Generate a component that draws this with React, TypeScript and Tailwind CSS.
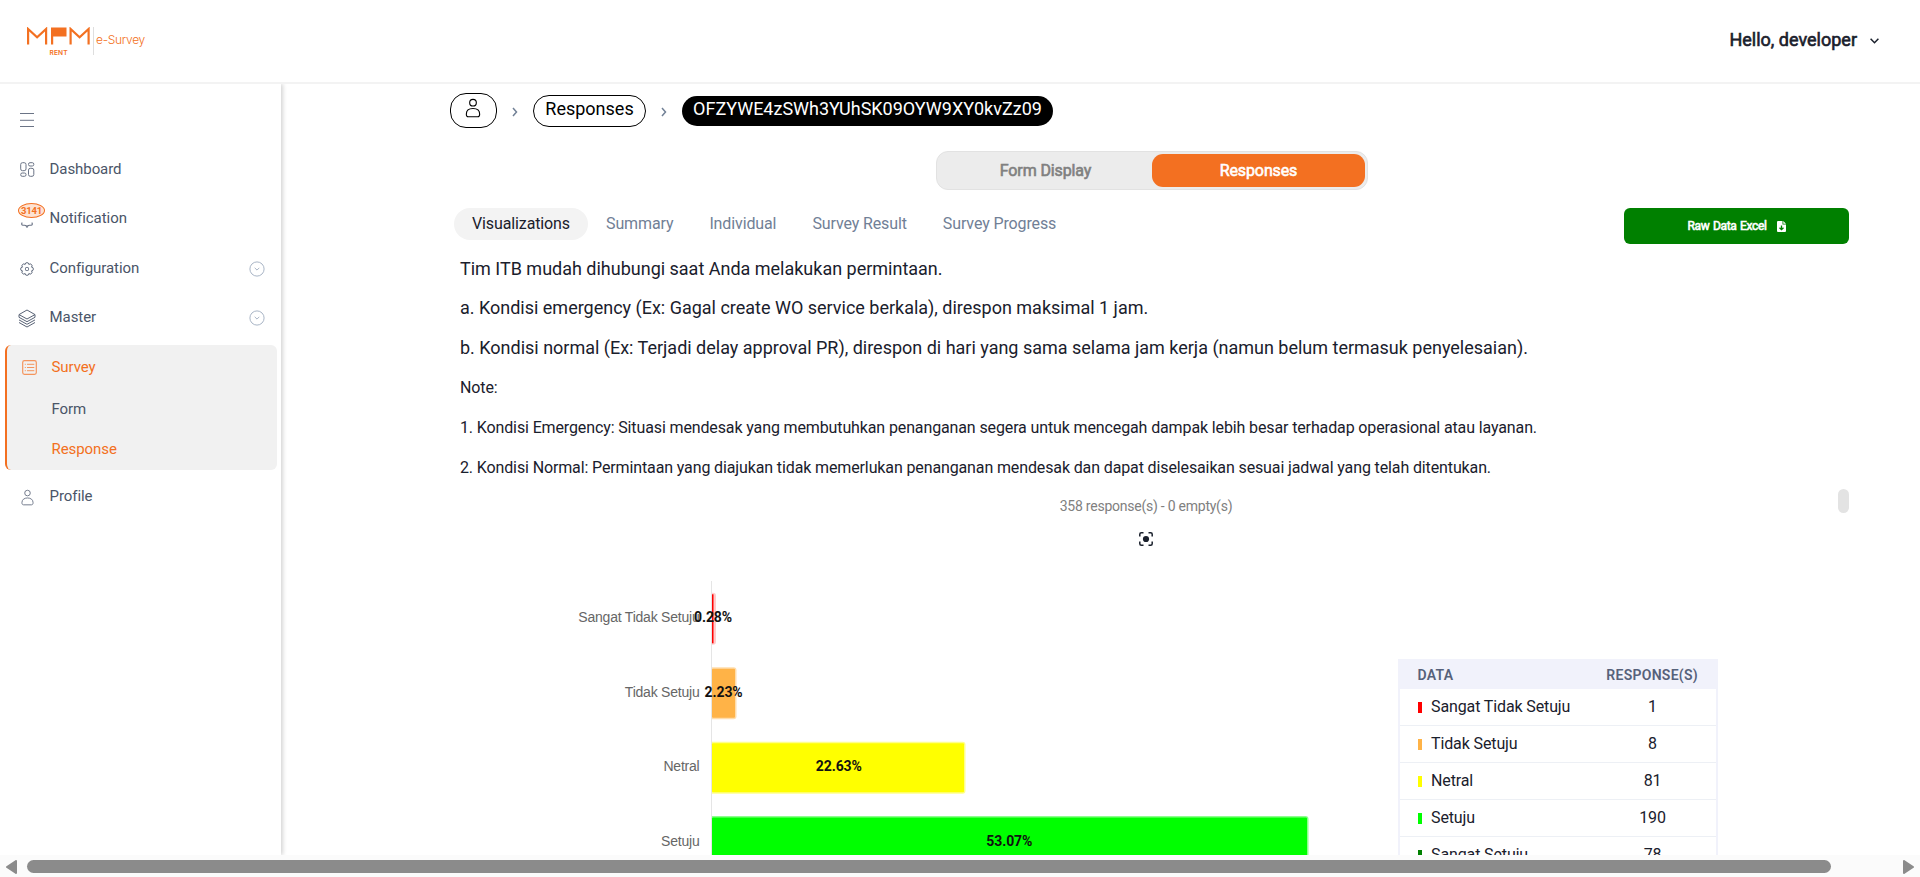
import type { ReactNode } from "react";

const Person = ({ className = "" }: { className?: string }) => (
  <svg viewBox="0 0 14 18" className={className} fill="none" stroke="currentColor" strokeWidth="1">
    <circle cx="7" cy="4.2" r="3" />
    <path d="M1 14.600C1 11.200 3.600 9.500 7 9.500s6 1.700 6 5.100c0 1.500-.6 2.300-1.800 2.300H2.800C1.600 16.900 1 16.100 1 14.600z" />
  </svg>
);

const ChevronRight = () => (
  <svg width="6" height="10" viewBox="0 0 6 10" fill="none" stroke="#718096" strokeWidth="1.5">
    <path d="M1 1l3.500 4L1 9" />
  </svg>
);

const Expand = () => (
  <svg width="16" height="16" viewBox="0 0 16 16" fill="none" stroke="#a9b5c6" strokeWidth="1">
    <circle cx="8" cy="8" r="7.1" />
    <path d="M5.700 6.800l2.300 2.300 2.300-2.300" />
  </svg>
);

const Gear = () => (
  <svg width="14" height="14" viewBox="0 0 14 14" fill="none" stroke="#5f697c" strokeWidth="1" strokeLinejoin="round">
    <path d="M11.500 5.140A1.860 1.860 0 0 1 11.500 8.860A1.860 1.860 0 0 1 8.860 11.500A1.860 1.860 0 0 1 5.140 11.500A1.860 1.860 0 0 1 2.500 8.860A1.860 1.860 0 0 1 2.500 5.140A1.860 1.860 0 0 1 5.140 2.500A1.860 1.860 0 0 1 8.860 2.500A1.860 1.860 0 0 1 11.500 5.140z" />
    <rect x="5.5" y="5.5" width="3" height="3" rx="0.8" />
  </svg>
);

const Layers = () => (
  <svg width="18" height="19" viewBox="0 0 18 19" fill="none" stroke="#596376" strokeWidth="1" strokeLinejoin="round">
    <path d="M9 1l8 4.600-8 4.400-8-4.400z" />
    <path d="M1 8.300l8 4.400 8-4.400M1 10.900l8 4.400 8-4.400M1 13.500L9 18l8-4.500M1 5.600v2.700M17 5.600v2.700" />
  </svg>
);

const Grid = () => (
  <svg width="15" height="15" viewBox="0 0 15 15" fill="none" stroke="#6b7486" strokeWidth="1">
    <rect x=".7" y=".7" width="5.3" height="8" rx="1.8" />
    <rect x="8.5" y=".7" width="5.3" height="3.3" rx="1.5" />
    <rect x=".7" y="11" width="5.3" height="3.3" rx="1.5" />
    <rect x="8.5" y="6.3" width="5.3" height="8" rx="1.8" />
  </svg>
);

const Bell = () => (
  <svg width="12" height="6" viewBox="0 0 12 6" fill="none" stroke="#6b7486" strokeWidth="1.1">
    <path d="M1.300.6C.2 1.800.6 3.100 2 3.200h1.500c.9 0 1 .9 2.500 .9s1.600-.9 2.500-.9H10c1.400-.1 1.800-1.400.7-2.600" />
    <path d="M5 4.900h2" />
  </svg>
);

const ListIcon = () => (
  <svg width="15" height="15" viewBox="0 0 15 15" fill="none" stroke="#f4945c">
    <rect x=".7" y=".7" width="13.6" height="13.6" rx="1.8" strokeWidth="1.2" />
    <path d="M2.800 4.300h1M2.800 7.500h1M2.800 10.700h1M5 4.300h7.300M5 7.500h7.300M5 10.700h7.300" />
  </svg>
);

function Logo() {
  return (
    <div className="flex h-[29px] items-start pl-[27px]">
      <svg width="69" height="29" viewBox="0 0 69 29" className="shrink-0">
        <g fill="none" stroke="#f37021" strokeWidth="2.2">
          <path d="M1.100 17.500V2l9 8.300L19.100 2v15.500" />
          <path d="M43.600 17.500V2l9 8.300L61.600 2v15.500" />
        </g>
        <path d="M24 .5h15.500v9H26.200v8H24z" fill="#f37021" />
        <path d="M66.500 0v28" stroke="#dedede" />
        <text x="22.500" y="28" fontFamily="Inter" fontSize="6.6" fontWeight="600" fill="#f37021" textLength="18">RENT</text>
      </svg>
      <span className="mt-[5px] font-[Inter] text-[12px] leading-4 font-light tracking-[-0.3px] text-[#f37021]">e-Survey</span>
    </div>
  );
}

function NavRow({ icon, label, expand, height = "h-[49.5px]" }: { icon: ReactNode; label: string; expand?: boolean; height?: string }) {
  return (
    <div className={`flex items-center ${height}`}>
      <div className="flex w-[54px] shrink-0 justify-center">{icon}</div>
      <span className="-ml-[4.5px] grow pb-[2px]">{label}</span>
      {expand && <div className="mr-[16px]"><Expand /></div>}
    </div>
  );
}

function Sidebar() {
  return (
    <aside className="w-[281px] shrink-0 bg-white text-[15px] leading-5 tracking-[-0.06px] text-[#4a5568] shadow-[2px_0_4px_rgba(0,0,0,0.17)]">
      <div className="flex h-[61px] flex-col pt-[29px] pl-5">
        <svg width="14" height="15" viewBox="0 0 14 15" stroke="#6b7486" strokeWidth="1">
          <path d="M0 .5h14M0 7.300h14M0 13.500h14" />
        </svg>
      </div>
      <NavRow icon={<Grid />} label="Dashboard" />
      <NavRow
        icon={
          <div className="relative flex h-[22px] w-4 items-end justify-center pb-[2px]">
            <Bell />
            <span className="absolute -top-[5px] -left-[1px] flex h-[15px] w-[27px] items-center justify-center rounded-[50%] border border-[#f37021] bg-[#fde3d3] text-[9.5px] font-bold tracking-[-0.2px] text-[#f37021]">3141</span>
          </div>
        }
        label="Notification"
      />
      <NavRow icon={<Gear />} label="Configuration" expand />
      <NavRow icon={<Layers />} label="Master" expand />
      <div className="mt-[2px] mr-1 ml-[5px] h-[125px] rounded-md border-l-2 border-[#f37021] bg-[#f1f1f1]">
        <div className="flex h-[45px] items-center pl-[15px] text-[#f37021]">
          <ListIcon />
          <span className="ml-[14.5px] pb-[2px]">Survey</span>
        </div>
        <div className="flex h-[38px] items-center pl-[44.5px]">Form</div>
        <div className="flex h-[42px] items-center pl-[44.5px] text-[#f37021]">Response</div>
      </div>
      <NavRow icon={<Person className="h-[17px] w-[13px] text-[#6b7486]" />} label="Profile" height="h-[54px]" />
    </aside>
  );
}

const bars = [
  { label: "Sangat Tidak Setuju", pct: "0.28%", y: 13.3, w: 2, color: "#ff0000", tx: 713 },
  { label: "Tidak Setuju", pct: "2.23%", y: 87.8, w: 23.5, color: "#ffb347", tx: 723.6 },
  { label: "Netral", pct: "22.63%", y: 162.3, w: 252.5, color: "#ffff00", tx: 838.8 },
  { label: "Setuju", pct: "53.07%", y: 236.5, w: 595.5, color: "#00ff00", tx: 1009.3 },
];

function Chart() {
  return (
    <svg width="800" height="290" viewBox="560 0 800 290" className="ml-[100px] shrink-0 font-[Liberation_Sans]">
      <path d="M711.500 0v290" stroke="#e5e5e5" />
      {bars.map((b) => (
        <g key={b.label}>
          <text x="699.5" y={b.y + 28} textAnchor="end" fontSize="14" letterSpacing="-0.22" fill="#666">{b.label}</text>
          <path
            d={`M712 ${b.y - 1.5}h${b.w > 4 ? b.w - 2 : b.w - 1}q3 0 3 3v46q0 3-3 3h-${b.w > 4 ? b.w - 2 : b.w - 1}z`}
            fill={b.color}
            fillOpacity={b.w > 4 ? 0.45 : 0.2}
          />
          <rect x="712" y={b.y} width={b.w - 0.5} height="49" rx={b.w > 4 ? 1 : 0} fill={b.color} />
          <text x={b.tx} y={b.y + 28} textAnchor="middle" fontFamily="Roboto" fontSize="14" fontWeight="700" letterSpacing="-0.1" fill="#111">{b.pct}</text>
        </g>
      ))}
    </svg>
  );
}

const rows: [string, string, string][] = [
  ["bg-[#ff0000]", "Sangat Tidak Setuju", "1"],
  ["bg-[#ffb347]", "Tidak Setuju", "8"],
  ["bg-[#ffff00]", "Netral", "81"],
  ["bg-[#00ff00]", "Setuju", "190"],
  ["bg-[#008000]", "Sangat Setuju", "78"],
];

function DataTable() {
  return (
    <div className="mt-[78px] ml-[38px] w-[320px] shrink-0 border-x-2 border-[#f1f2fb] text-base leading-6">
      <div className="flex h-[30px] items-center bg-[#f1f2fb] pl-[17.5px] text-[14px] leading-5 font-semibold tracking-[0.28px] text-[#56617a]">
        <span className="grow pt-[2px]">DATA</span>
        <span className="pt-[2px] pr-[18px]">RESPONSE(S)</span>
      </div>
      {rows.map(([color, label, count]) => (
        <div key={label} className="flex h-[37px] items-center border-b border-[#edf0f5] pl-[18px] tracking-[-0.12px]">
          <i className={`mt-px mr-[9px] h-[11px] w-1 ${color}`} />
          <span className="grow">{label}</span>
          <span className="w-[127px] text-center">{count}</span>
        </div>
      ))}
    </div>
  );
}

const tabs = ["Summary", "Individual", "Survey Result", "Survey Progress"];

function Main() {
  return (
    <main className="relative flex min-w-0 grow flex-col overflow-hidden pl-[169px]">
      <nav className="mt-[9px] flex h-[35px] items-center text-[18px] leading-6 text-black">
        <div className="flex h-[35px] w-[47px] items-center justify-center rounded-2xl border border-black">
          <Person className="mr-px mb-[5px] h-[20px] w-[16px]" />
        </div>
        <div className="flex w-9 justify-center pt-[2px]"><ChevronRight /></div>
        <div className="flex h-[32px] w-[113px] justify-center rounded-2xl border border-black pt-[1px]">Responses</div>
        <div className="flex w-9 justify-center pt-[2px]"><ChevronRight /></div>
        <div className="flex h-[30px] w-[371px] justify-center rounded-2xl bg-black pt-[1px] text-white">OFZYWE4zSWh3YUhSK09OYW9XY0kvZz09</div>
      </nav>
      <div className="mt-[23px] ml-[486px] flex h-[39px] w-[432px] rounded-xl border border-[#e2e2e2] bg-[#ececec] p-[2px] text-base leading-[33px] tracking-[-0.12px] [-webkit-text-stroke:0.6px_currentColor]">
        <div className="grow text-center text-[#808080]">Form Display</div>
        <div className="w-[213px] rounded-[11px] bg-[#f37021] text-center text-white">Responses</div>
      </div>
      <div className="mt-[18px] flex h-9 items-start pl-1 tracking-[-0.12px]">
        <div className="h-8 w-[134px] rounded-2xl bg-[#f3f3f3] text-center leading-[31px] text-[#1a202c]">Visualizations</div>
        {tabs.map((t) => (
          <div key={t} className="px-[18px] leading-[31px] text-[#718096]">{t}</div>
        ))}
        <div className="mr-[71px] ml-auto flex h-9 w-[225px] items-center justify-center gap-[10px] rounded-md bg-[#008000] text-[12px] tracking-[-0.35px] text-white [word-spacing:1px] [-webkit-text-stroke:0.6px_currentColor]">
          Raw Data Excel
          <svg width="9" height="11" viewBox="0 0 9 11">
            <path d="M1 0h4.500v3.500H9V10a1 1 0 0 1-1 1H1a1 1 0 0 1-1-1V1a1 1 0 0 1 1-1zM6.300 0L9 2.700H6.300z" fill="#fff" />
            <path d="M4.500 4.500V8M2.500 6.700l2 2 2-2" stroke="#008000" strokeWidth="1.3" fill="none" />
          </svg>
        </div>
      </div>
      <section className="flex flex-col pl-[10px] text-[#1a202c]">
        <div className="flex flex-col pt-[5px] text-[18px] tracking-[-0.008px]">
          <p className="h-[39px] leading-[40px]">Tim ITB mudah dihubungi saat Anda melakukan permintaan.</p>
          <p className="h-[40px] leading-[40px]">a. Kondisi emergency (Ex: Gagal create WO service berkala), direspon maksimal 1 jam.</p>
          <p className="h-[40px] leading-[40px]">b. Kondisi normal (Ex: Terjadi delay approval PR), direspon di hari yang sama selama jam kerja (namun belum termasuk penyelesaian).</p>
        </div>
        <div className="flex flex-col text-base tracking-[-0.125px]">
          <p className="h-[40px] leading-[40px]">Note:</p>
          <p className="h-[40px] leading-[40px]">1. Kondisi Emergency: Situasi mendesak yang membutuhkan penanganan segera untuk mencegah dampak lebih besar terhadap operasional atau layanan.</p>
          <p className="h-[40px] leading-[40px]">2. Kondisi Normal: Permintaan yang diajukan tidak memerlukan penanganan mendesak dan dapat diselesaikan sesuai jadwal yang telah ditentukan.</p>
        </div>
        <div className="flex w-[1372px] flex-col items-center">
          <p className="mt-[8px] text-[14px] leading-5 tracking-[-0.24px] text-[#808080]">358 response(s) - 0 empty(s)</p>
          <svg className="mt-4" width="14" height="14" viewBox="0 0 14 14" fill="none" stroke="#1a202c" strokeWidth="1.5">
            <path d="M.8 4.500V2.300C.8 1.300 1.300.8 2.300.8h2.200M9.500.8h2.200c1 0 1.500.5 1.500 1.500v2.200M13.200 9.500v2.200c0 1-.5 1.500-1.500 1.500H9.500M4.500 13.200H2.300c-1 0-1.500-.5-1.500-1.500V9.500" />
            <circle cx="7" cy="7" r="3.1" fill="#1a202c" stroke="none" />
          </svg>
        </div>
        <div className="mt-[35px] flex items-start">
          <Chart />
          <DataTable />
        </div>
      </section>
      <div className="absolute top-[405px] right-[71px] h-6 w-[11px] rounded-md bg-[#e3e3e3]" />
    </main>
  );
}

export default function App() {
  return (
    <div className="flex h-[877px] w-[1920px] flex-col overflow-hidden bg-white font-[Roboto,sans-serif]">
      <header className="flex h-[84px] shrink-0 items-center justify-between border-b-2 border-[#f3f3f3]">
        <Logo />
        <div className="mr-[41px] flex items-center gap-[13px] pb-[3px] text-[18px] text-[#1a202c] [-webkit-text-stroke:0.6px_currentColor]">
          Hello, developer
          <svg width="9" height="6" viewBox="0 0 9 6" fill="none" stroke="#1a202c" strokeWidth="1.5" className="mt-[3px]">
            <path d="M.6.8l3.900 4L8.400.8" />
          </svg>
        </div>
      </header>
      <div className="flex h-[771px] shrink-0 overflow-hidden">
        <Sidebar />
        <Main />
      </div>
      <div className="flex h-[22px] shrink-0 items-start bg-[#fbfbfb] pt-[5px]">
        <svg width="27" height="14" viewBox="0 0 27 14" className="shrink-0" fill="#8b8b8b" stroke="#8b8b8b" strokeWidth="2" strokeLinejoin="round">
          <path d="M16 1v12L7 7z" />
        </svg>
        <div className="h-[13px] w-[1804px] rounded-full bg-[#8b8b8b]" />
        <svg width="89" height="14" viewBox="0 0 89 14" className="shrink-0" fill="#8b8b8b" stroke="#8b8b8b" strokeWidth="2" strokeLinejoin="round">
          <path d="M73 1v12l9-6z" />
        </svg>
      </div>
    </div>
  );
}
